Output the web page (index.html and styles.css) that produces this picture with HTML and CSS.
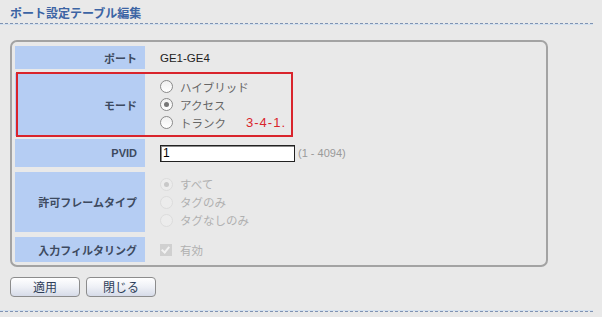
FILE: index.html
```html
<!DOCTYPE html>
<html lang="ja">
<head>
    <meta charset="UTF-8">
    <title>ポート設定テーブル編集</title>
    <link rel="stylesheet" href="styles.css">
</head>
<body>
    <h1 class="page-title">ポート設定テーブル編集</h1>

    <div class="panel">
        <div class="row row-port">
            <div class="label">ポート</div>
            <div class="value"><span class="port-name">GE1-GE4</span></div>
        </div>

        <div class="row row-mode">
            <div class="label">モード</div>
            <div class="value options">
                <label class="option"><span class="radio"></span>ハイブリッド</label>
                <label class="option"><span class="radio checked"></span>アクセス</label>
                <label class="option"><span class="radio"></span>トランク</label>
            </div>
            <!-- annotation box from the manual -->
            <div class="callout"><span class="callout-num">3-4-1.</span></div>
        </div>

        <div class="row row-pvid">
            <div class="label">PVID</div>
            <div class="value">
                <input class="text-input" type="text" value="1">
                <span class="hint">(1 - 4094)</span>
            </div>
        </div>

        <div class="row row-frame">
            <div class="label">許可フレームタイプ</div>
            <div class="value options disabled">
                <label class="option"><span class="radio checked"></span>すべて</label>
                <label class="option"><span class="radio"></span>タグのみ</label>
                <label class="option"><span class="radio"></span>タグなしのみ</label>
            </div>
        </div>

        <div class="row row-filter">
            <div class="label">入力フィルタリング</div>
            <div class="value disabled">
                <label class="option"><span class="check"></span>有効</label>
            </div>
        </div>
    </div>

    <div class="buttons">
        <button class="btn" type="button">適用</button>
        <button class="btn" type="button">閉じる</button>
    </div>

    <div class="footer-line"></div>
</body>
</html>
```

FILE: styles.css
```css
body {
    margin: 0;
    padding: 0;
    background-color: #e9e9e9;
    color: #333;
    font-family: "Liberation Sans", "Noto Sans CJK JP", sans-serif;
    font-size: 11px;
}

.page-title {
    width: 583px;
    margin: 0;
    padding: 7px 0 2px 10px;
    font-size: 12px;
    line-height: 14px;
    font-weight: bold;
    color: #3c64a4;
    border-bottom: 1px dashed #7f93b3;
    box-shadow: 0 1px 0 #d3e0ee;
}

.panel {
    box-sizing: border-box;
    width: 538px;
    margin: 16px 0 0 10px;
    padding: 4px 3px 3px 3px;
    border: 2px solid #a3a3a3;
    border-radius: 7px;
}

.row {
    position: relative;
    display: flex;
}

.row-port { height: 23px; }
.row-mode { height: 63px; margin-top: 4px; }
.row-pvid { height: 28px; margin-top: 3px; }
.row-frame { height: 60px; margin-top: 5px; }
.row-filter { height: 25px; margin-top: 5px; }

.label {
    width: 130px;
    flex-shrink: 0;
    box-sizing: border-box;
    padding-right: 8px;
    display: flex;
    align-items: center;
    justify-content: flex-end;
    background-color: #b5cdf3;
    color: #3d4a60;
    font-weight: bold;
    font-size: 11px;
}

.value {
    padding-left: 15px;
    display: flex;
    align-items: center;
}

.port-name {
    color: #222;
    font-size: 11.5px;
}

.options {
    flex-direction: column;
    align-items: flex-start;
    justify-content: center;
}

.option {
    display: flex;
    align-items: center;
    height: 18px;
    color: #666;
    font-size: 11.5px;
}

.radio {
    box-sizing: border-box;
    width: 13px;
    height: 13px;
    margin-right: 7px;
    border: 1px solid #8a8a8a;
    border-radius: 50%;
    background: linear-gradient(#f0f0f0, #ffffff);
    position: relative;
}

.radio.checked::after {
    content: "";
    position: absolute;
    left: 3px;
    top: 3px;
    width: 5px;
    height: 5px;
    border-radius: 50%;
    background-color: #777;
}

.disabled .option {
    color: #b0b0b0;
}

.disabled .radio {
    border-color: #dcdcdc;
    background: #ececec;
}

.disabled .radio.checked::after {
    background-color: #c8c8c8;
}

.check {
    box-sizing: border-box;
    width: 12px;
    height: 12px;
    margin-right: 8px;
    background-color: #d0d0d0;
    position: relative;
}

.check::after {
    content: "";
    position: absolute;
    left: 3px;
    top: 1px;
    width: 3px;
    height: 6px;
    border-right: 2px solid #f2f2f2;
    border-bottom: 2px solid #f2f2f2;
    transform: rotate(40deg);
}

.callout {
    position: absolute;
    left: 1px;
    top: -1px;
    box-sizing: border-box;
    width: 277px;
    height: 65px;
    border: 2px solid #d9242c;
}

.callout-num {
    position: absolute;
    right: 5px;
    bottom: 5px;
    color: #d9242c;
    font-size: 13px;
    letter-spacing: 1px;
}

.text-input {
    box-sizing: border-box;
    width: 135px;
    height: 17px;
    margin: 0;
    padding: 0 2px;
    border: 1px solid #222;
    box-shadow: inset 1px 1px 0 #8a8a8a;
    background-color: #fff;
    font-family: "Liberation Sans", sans-serif;
    font-size: 12px;
    color: #000;
}

.hint {
    margin-left: 3px;
    color: #9a9a9a;
}

.buttons {
    display: flex;
    gap: 6px;
    margin: 10px 0 0 10px;
}

.btn {
    width: 70px;
    height: 20px;
    padding: 0;
    border: 1px solid #8c8c8c;
    border-radius: 4px;
    background: linear-gradient(#ffffff, #eef0f6 50%, #d6dbe8);
    color: #2f3f5a;
    font-family: "Noto Sans CJK JP", sans-serif;
    font-size: 12px;
    line-height: 16px;
}

.footer-line {
    width: 593px;
    margin-top: 14px;
    border-bottom: 1px dashed #7f93b3;
    box-shadow: 0 -1px 0 #d3e0ee;
}
```
